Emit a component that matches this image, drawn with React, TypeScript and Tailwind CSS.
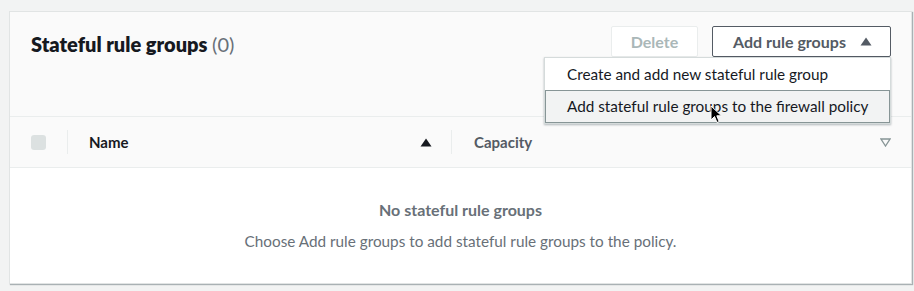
import React from 'react';

function Cursor() {
  return (
    <svg width="14" height="20" viewBox="0 0 14 20" className="absolute left-[164px] top-[14px]">
      <path d="M1 1 L1 15 L4.5 11.5 L7 17.5 L9.2 16.6 L6.8 10.8 L11.5 10.8 Z" fill="#000" stroke="#fff" strokeWidth="1" />
    </svg>
  );
}

export default function App() {
  return (
    <div className="w-[914px] h-[291px] bg-[#f2f3f3] pt-[11px] pl-[9px] font-['Lato','Liberation_Sans',sans-serif]">
      <div className="w-[903px] h-[273px] bg-white border border-[#e1e4e4] shadow-[1px_1px_1px_rgba(0,28,36,0.3)] flex flex-col">
        {/* header */}
        <div className="h-[105px] bg-[#fafafa] border-b border-[#eaeded] flex items-start justify-between pl-[21px] pr-[20px] pt-[14px]">
          <h2 className="text-[20px] font-extrabold text-[#16191f] leading-[36px]">
            Stateful rule groups <span className="font-normal text-[#687078]">(0)</span>
          </h2>
          <div className="flex gap-[14px] relative">
            <button className="h-[31px] w-[87px] border border-[#eaeded] rounded-[2px] bg-white text-[16px] font-bold text-[#aab7b8]">
              Delete
            </button>
            <button className="h-[31px] w-[179px] border border-[#545b64] rounded-[2px] bg-white text-[16px] font-bold text-[#545b64] flex items-center justify-center gap-[14px] pl-[2px]">
              Add rule groups
              <svg width="12" height="9" viewBox="0 0 12 9">
                <path d="M0.5 8.5 L6 0.5 L11.5 8.5 Z" fill="#545b64" />
              </svg>
            </button>
            <div className="absolute top-[31px] right-0 w-[347px] bg-white border border-[#d5dbdb] shadow-[0_1px_2px_rgba(0,28,36,0.3)] z-10 text-[15.3px] text-[#16191f]">
              <div className="h-[32px] flex items-center pl-[21px] border border-transparent">Create and add new stateful rule group</div>
              <div className="h-[33px] flex items-center pl-[21px] bg-[#f2f3f3] border border-[#879596] relative">
                Add stateful rule groups to the firewall policy
                <Cursor />
              </div>
            </div>
          </div>
        </div>
        {/* table header */}
        <div className="h-[51px] bg-[#fafafa] border-b border-[#eaeded] flex items-center text-[15px] font-bold">
          <div className="w-[57px] flex justify-center">
            <div className="w-[15px] h-[15px] rounded-[3px] bg-[#d5dbdb] opacity-80" />
          </div>
          <div className="w-px h-[24px] bg-[#eaeded]" />
          <div className="flex-1 flex items-center justify-between pl-[21px] pr-[19px] text-[#16191f]">
            <span>Name</span>
            <svg width="12" height="9" viewBox="0 0 12 9">
              <path d="M0.5 8.5 L6 0.5 L11.5 8.5 Z" fill="#16191f" />
            </svg>
          </div>
          <div className="w-px h-[24px] bg-[#eaeded]" />
          <div className="w-[459px] flex items-center justify-between pl-[22px] pr-[20px] text-[#545b64]">
            <span>Capacity</span>
            <svg width="11" height="9" viewBox="0 0 11 9">
              <path d="M1 1 L10 1 L5.5 8 Z" fill="none" stroke="#879596" strokeWidth="1.3" />
            </svg>
          </div>
        </div>
        {/* empty state */}
        <div className="flex-1 flex flex-col items-center pt-[31px] text-[15.3px] text-[#687078]">
          <div className="text-[16px] font-bold leading-[22px]">No stateful rule groups</div>
          <div className="mt-[9px] leading-[22px]">Choose Add rule groups to add stateful rule groups to the policy.</div>
        </div>
      </div>
    </div>
  );
}
